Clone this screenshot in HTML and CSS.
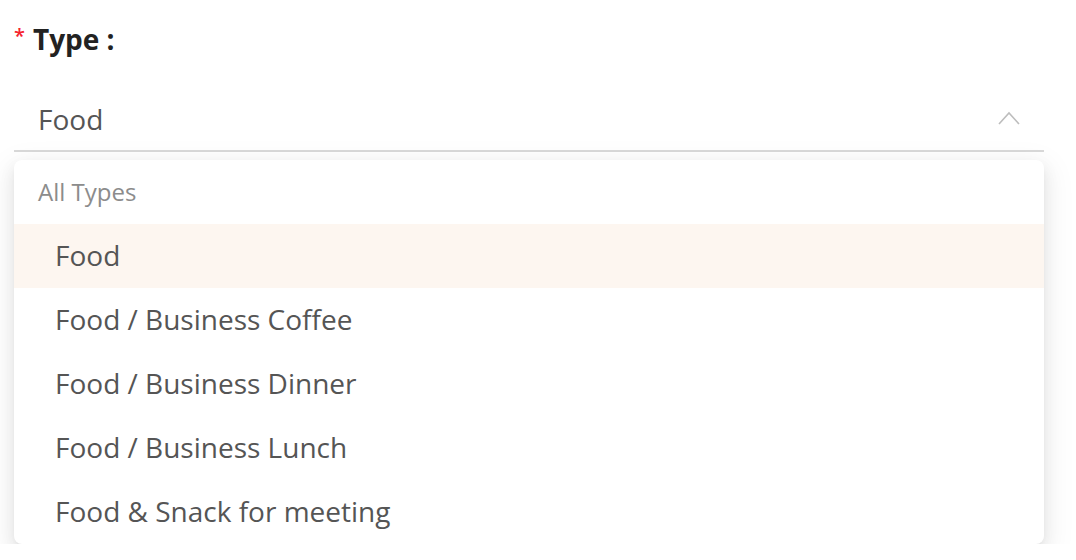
FILE: index.html
```html
<!DOCTYPE html>
<html>
<head>
<meta charset="utf-8">
<link rel="stylesheet" href="styles.css">
</head>
<body>
<div class="field">
  <div class="label"><span class="req">*</span><span class="label-text">Type</span><span class="colon">:</span></div>
  <div class="select">
    <span class="value">Food</span>
    <svg class="arrow" width="22" height="14" viewBox="0 0 22 14"><path d="M1 13 L11 2 L21 13" fill="none" stroke="#bdbdbd" stroke-width="1.6"/></svg>
  </div>
  <div class="dropdown">
    <div class="group">All Types</div>
    <div class="option active">Food</div>
    <div class="option">Food / Business Coffee</div>
    <div class="option">Food / Business Dinner</div>
    <div class="option">Food / Business Lunch</div>
    <div class="option">Food &amp; Snack for meeting</div>
  </div>
</div>
</body>
</html>
```

FILE: styles.css
```css
html, body {
  margin: 0;
  padding: 0;
  background: #fff;
}
body {
  font-family: "Open Sans", "Noto Sans", sans-serif;
  color: #555;
}
.field {
  width: 1030px;
  padding-left: 14px;
  padding-top: 19px;
}
.label {
  display: flex;
  align-items: center;
  height: 40px;
  font-size: 28px;
  font-weight: 700;
  color: #222;
}
.req {
  color: #f5222d;
  font-size: 20px;
  font-weight: 600;
  margin-right: 8px;
  position: relative;
  top: -4px;
}
.colon {
  margin-left: 7px;
}
.select {
  margin-top: 29px;
  height: 62px;
  border-bottom: 2px solid #d9d9d9;
  display: flex;
  align-items: center;
  justify-content: space-between;
  padding: 0 24px;
  box-sizing: content-box;
  width: calc(100% - 48px);
}
.value {
  font-size: 28px;
  color: #555;
}
.arrow {
  position: relative;
  top: -1px;
}
.dropdown {
  margin-top: 8px;
  background: #fff;
  border-radius: 8px;
  box-shadow: 0 3px 6px -4px rgba(0,0,0,0.12), 0 6px 16px 0 rgba(0,0,0,0.08), 0 9px 28px 8px rgba(0,0,0,0.05);
  overflow: hidden;
}
.group {
  height: 64px;
  display: flex;
  align-items: center;
  padding-left: 24px;
  padding-bottom: 2px;
  box-sizing: border-box;
  font-size: 24px;
  color: #8c8c8c;
}
.option {
  height: 64px;
  display: flex;
  align-items: center;
  padding-left: 41px;
  padding-bottom: 2px;
  box-sizing: border-box;
  font-size: 28px;
  color: #555;
}
.option.active {
  background: #fdf6f0;
}
```
